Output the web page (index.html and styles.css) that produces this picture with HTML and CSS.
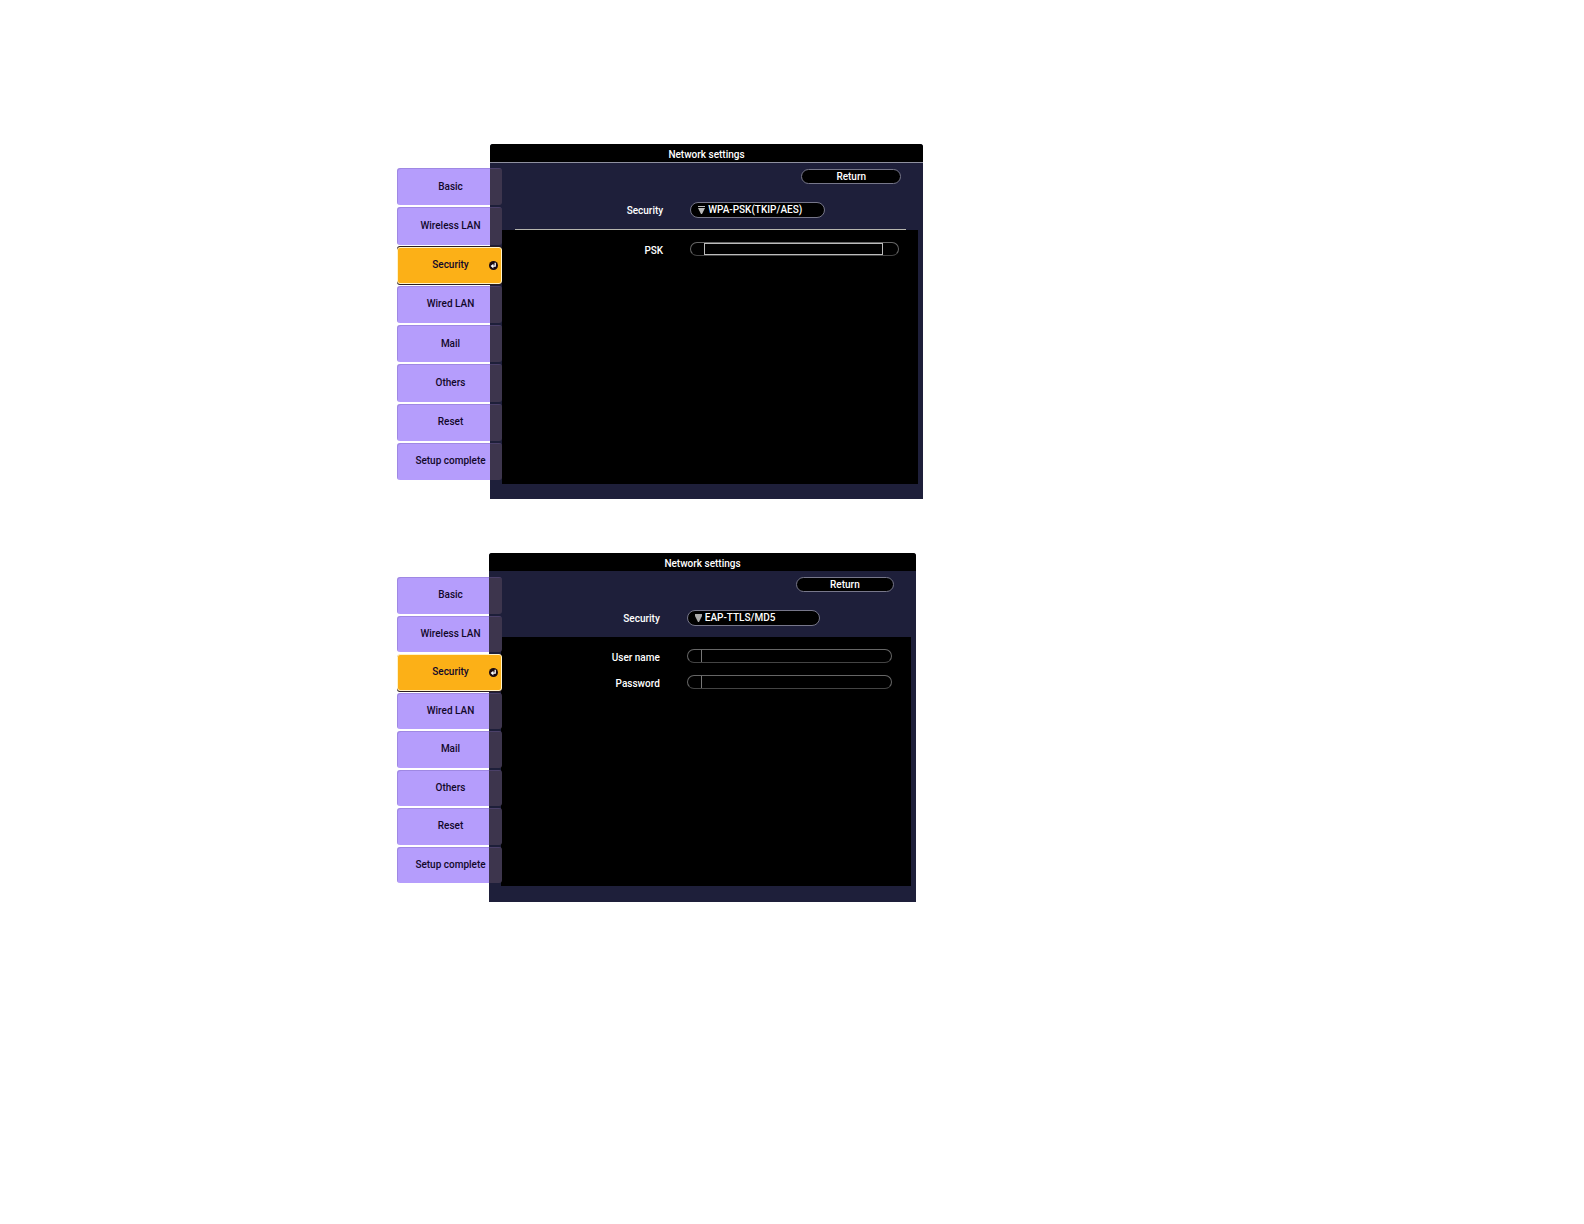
FILE: index.html
```html
<!DOCTYPE html>
<html lang="en">
<head>
  <meta charset="UTF-8" />
  <meta name="viewport" content="width=device-width, initial-scale=1.0" />
  <title>Network settings</title>
  <link rel="stylesheet" href="styles.css">
</head>
<body>
  <main>
    <!-- WPA-PSK -->
    <section class="screen screen-psk">
      <nav class="tabs">
        <button type="button" class="tab">Basic</button>
        <button type="button" class="tab">Wireless LAN</button>
        <button type="button" class="tab active">Security
          <svg class="enter-icon" viewBox="0 0 9 9">
            <circle cx="4.5" cy="4.5" r="4.5" fill="#1a0a10"/>
            <path d="M6.2 1.8v3.4H4" fill="none" stroke="#fff" stroke-width="1.3"/>
            <path d="M4.4 2.8v4.6L1.6 5.1z" fill="#fff"/>
          </svg>
        </button>
        <button type="button" class="tab">Wired LAN</button>
        <button type="button" class="tab">Mail</button>
        <button type="button" class="tab">Others</button>
        <button type="button" class="tab">Reset</button>
        <button type="button" class="tab">Setup complete</button>
      </nav>
      <form class="panel">
        <h1>Network settings</h1>
        <div class="panel-head">
          <button type="button" class="return-btn">Return</button>
          <div class="row">
            <label for="security1">Security</label>
            <div class="pill select-pill">
              <svg class="arrow" viewBox="0 0 7 8"><path d="M0 0h7v1H0zM0 2h7L4 8H3z" fill="#bbb"/></svg>
              <select id="security1"><option>WPA-PSK(TKIP/AES)</option></select>
            </div>
          </div>
        </div>
        <hr>
        <div class="panel-body">
          <div class="row">
            <label for="psk">PSK</label>
            <div class="pill"><input type="text" id="psk" class="boxed"></div>
          </div>
        </div>
      </form>
    </section>

    <!-- EAP -->
    <section class="screen screen-eap">
      <nav class="tabs">
        <button type="button" class="tab">Basic</button>
        <button type="button" class="tab">Wireless LAN</button>
        <button type="button" class="tab active">Security
          <svg class="enter-icon" viewBox="0 0 9 9">
            <circle cx="4.5" cy="4.5" r="4.5" fill="#1a0a10"/>
            <path d="M6.2 1.8v3.4H4" fill="none" stroke="#fff" stroke-width="1.3"/>
            <path d="M4.4 2.8v4.6L1.6 5.1z" fill="#fff"/>
          </svg>
        </button>
        <button type="button" class="tab">Wired LAN</button>
        <button type="button" class="tab">Mail</button>
        <button type="button" class="tab">Others</button>
        <button type="button" class="tab">Reset</button>
        <button type="button" class="tab">Setup complete</button>
      </nav>
      <form class="panel">
        <h1>Network settings</h1>
        <div class="panel-head">
          <button type="button" class="return-btn">Return</button>
          <div class="row">
            <label for="security2">Security</label>
            <div class="pill select-pill">
              <svg class="arrow" viewBox="0 0 7 8"><path d="M0 0h7v2L4 8H3L0 2z" fill="#aaa"/></svg>
              <select id="security2"><option>EAP-TTLS/MD5</option></select>
            </div>
          </div>
        </div>
        <div class="panel-body">
          <div class="row">
            <label for="user">User name</label>
            <div class="pill"><input type="text" id="user"></div>
          </div>
          <div class="row">
            <label for="password">Password</label>
            <div class="pill"><input type="password" id="password"></div>
          </div>
        </div>
      </form>
    </section>
  </main>
</body>
</html>
```
FILE: styles.css
```css
* {
  box-sizing: border-box;
}
body {
  margin: 0;
  background: #fff;
  font-family: Roboto, "Liberation Sans", sans-serif;
  font-size: 10px;
  font-weight: 500;
  line-height: 14px;
}
button, select, input {
  font: inherit;
  padding: 0;
  margin: 0;
}
main {
  display: flex;
  flex-direction: column;
  gap: 54px;
  padding: 144px 16px 144px calc(25% + 1px);
}
.screen {
  display: flex;
  align-items: flex-start;
  width: 100%;
  max-width: 526px;
}
.screen-eap {
  max-width: 519px;
}

/* tabs lie half over the panel edge */
.tabs {
  position: relative;
  z-index: 1;
  flex: none;
  display: grid;
  grid-auto-rows: 1fr;
  gap: 2px;
  width: 105px;
  height: 312px;
  margin: 24px -12px 0 0;
}
.screen-eap .tabs {
  height: 306px;
  margin-right: -13px;
}
.tab {
  padding-left: 2px;
  border: none;
  border-radius: 3px;
  background: linear-gradient(to right, #b59dfc calc(100% - 12px), #3d354d calc(100% - 12px));
  box-shadow: inset 1px 1px 0 rgba(110, 90, 170, 0.3);
  color: #12082a;
  text-align: center;
}
.screen-eap .tab {
  background: linear-gradient(to right, #b59dfc calc(100% - 13px), #3d354d calc(100% - 13px));
}
.screen .tab.active {
  position: relative;
  background: #fcb017;
  border: 1px solid #fff3c8;
  box-shadow: 0 1px 0 #2a1c20;
}
.screen-psk .tab.active {
  box-shadow: 0 1px 0 #2a1c20, 0 -1px 0 #2a1c20;
}
.enter-icon {
  position: absolute;
  right: 3px;
  top: calc(50% - 4px);
  width: 9px;
  height: 9px;
}

.panel {
  flex: 1;
  min-width: 0;
  padding-bottom: 15px;
  background: #1e1f3a;
  border-radius: 3px 3px 0 0;
  overflow: hidden;
  color: #fff;
}
.screen-eap .panel {
  padding-bottom: 16px;
}
h1 {
  margin: 0;
  padding-top: 4px;
  background: #000;
  font-size: 10px;
  font-weight: 500;
  line-height: 14px;
  text-align: center;
}
.panel-head {
  display: flex;
  flex-direction: column;
  gap: 18px;
  padding: 6px 0 11px;
}
.screen-psk .panel-head {
  border-top: 1px solid #8f90a0;
}
.return-btn {
  align-self: flex-end;
  width: 23%;
  height: 15px;
  margin-right: 22px;
  border: 1px solid #77778a;
  border-radius: 8px;
  background: #000;
  color: #fff;
  line-height: 12px;
}
.row {
  display: grid;
  grid-template-columns: 40% 1fr;
  column-gap: 27px;
}
.row label {
  padding-top: 2px;
  line-height: 14px;
  text-align: right;
}
.pill {
  display: flex;
  height: 14px;
  margin-right: 24px;
  padding: 0 15px 0 13px;
  border: 1px solid #666;
  border-bottom-color: #444;
  border-radius: 7px;
  background: #000;
}
.select-pill {
  align-items: center;
  gap: 3px;
  width: 58%;
  height: 16px;
  margin-right: 0;
  padding: 0 7px;
  border-color: #77778a;
  border-radius: 8px;
}
.arrow {
  flex: none;
  width: 7px;
  height: 8px;
}
select {
  flex: 1;
  min-width: 0;
  height: 14px;
  appearance: none;
  border: none;
  background: none;
  color: #fff;
  line-height: 14px;
}
input {
  flex: 1;
  min-width: 0;
  border: none;
  border-left: 1px solid #777;
  background: #000;
  color: #fff;
  outline: none;
}
input.boxed {
  border: 1px solid #bbb;
}
hr {
  height: 1px;
  margin: 0 17px 0 25px;
  border: none;
  background: #b5b5ae;
}
.panel-body {
  display: flex;
  flex-direction: column;
  gap: 10px;
  min-height: 254px;
  margin: 0 5px 0 12px;
  padding-top: 12px;
  background: #000;
}
.screen-eap .panel-body {
  min-height: 249px;
}
/* body is inset from the panel, pull the columns back in line with the header */
.panel-body .row {
  margin: 0 -5px 0 -12px;
}
```
